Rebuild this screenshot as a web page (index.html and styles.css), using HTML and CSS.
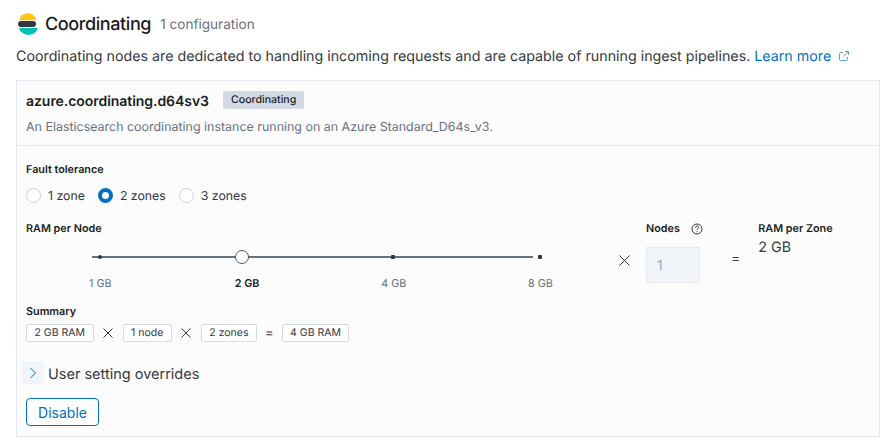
FILE: index.html
```html
<!DOCTYPE html>
<html lang="en">
<head>
<meta charset="utf-8">
<title>Coordinating</title>
<link rel="stylesheet" href="styles.css">
</head>
<body>
<header class="title-row">
  <svg class="logo" width="20" height="22" viewBox="0 0 20 22">
    <path d="M1.200 7.200C1.800 3.200 5.300.300 9.800.300s8 2.900 8.600 6.900z" fill="#fec514"/>
    <rect x="0" y="8" width="18" height="6" rx="3" fill="#343741"/>
    <path d="M1.200 15h18.400c-.5 3.900-4.300 6.800-9 6.800S1.800 18.900 1.200 15z" fill="#00bfb3"/>
  </svg>
  <h1 class="title">Coordinating</h1>
  <span class="config-count">1 configuration</span>
</header>
<p class="intro">Coordinating nodes are dedicated to handling incoming requests and are capable of running ingest pipelines. <a class="link" href="#">Learn more</a>
  <svg class="external" width="12" height="12" viewBox="0 0 12 12" fill="none" stroke="#5b9fd4" stroke-width="1"><path d="M5 2.500H2.500a1 1 0 0 0-1 1v6a1 1 0 0 0 1 1h6a1 1 0 0 0 1-1V7"/><path d="M7 1.500h3.500V5M10.500 1.500 5.500 6.500"/></svg>
</p>
<section class="panel">
  <div class="panel-head">
    <div class="instance-row">
      <h2 class="instance">azure.coordinating.d64sv3</h2>
      <span class="badge">Coordinating</span>
    </div>
    <p class="instance-desc">An Elasticsearch coordinating instance running on an Azure Standard_D64s_v3.</p>
  </div>
  <div class="panel-body">
    <div class="label">Fault tolerance</div>
    <div class="radios">
      <label class="radio"><span class="radio-dot"></span>1 zone</label>
      <label class="radio"><span class="radio-dot radio-on"></span>2 zones</label>
      <label class="radio"><span class="radio-dot"></span>3 zones</label>
    </div>
    <div class="sizing">
      <div class="ram">
        <div class="label">RAM per Node</div>
        <div class="slider">
          <div class="track"></div>
          <span class="tick tick-1"></span>
          <span class="thumb"></span>
          <span class="tick tick-3"></span>
          <span class="tick tick-4"></span>
        </div>
        <div class="slider-labels">
          <span>1 GB</span>
          <span class="current">2 GB</span>
          <span>4 GB</span>
          <span>8 GB</span>
        </div>
      </div>
      <svg class="times times-big" width="11" height="11" viewBox="0 0 11 11" stroke="#343741" stroke-width="1"><path d="M.5.500l10 10M10.500.500l-10 10"/></svg>
      <div class="nodes">
        <div class="label nodes-label">Nodes
          <svg width="12" height="12" viewBox="0 0 12 12" fill="none" stroke="#343741" stroke-width="1"><circle cx="6" cy="6" r="5"/><path d="M4.400 4.700c0-2.100 3.300-2.100 3.300-.1 0 1.200-1.700 1.300-1.700 2.500"/><path d="M6 8.200v1"/></svg>
        </div>
        <div class="nodes-input">1</div>
      </div>
      <span class="equals equals-big">=</span>
      <div class="zone">
        <div class="label">RAM per Zone</div>
        <div class="zone-value">2 GB</div>
      </div>
    </div>
    <div class="label summary-label">Summary</div>
    <div class="summary">
      <span class="chip">2 GB RAM</span>
      <svg class="times" width="10" height="10" viewBox="0 0 10 10" stroke="#343741" stroke-width="1"><path d="M.5.500l9 9M9.500.500l-9 9"/></svg>
      <span class="chip">1 node</span>
      <svg class="times" width="10" height="10" viewBox="0 0 10 10" stroke="#343741" stroke-width="1"><path d="M.5.500l9 9M9.500.500l-9 9"/></svg>
      <span class="chip">2 zones</span>
      <span class="equals">=</span>
      <span class="chip">4 GB RAM</span>
    </div>
    <div class="accordion">
      <span class="chevron"><svg width="8" height="12" viewBox="0 0 8 12" fill="none" stroke="#0071c2" stroke-width="1"><path d="M1.500 1l5 5-5 5"/></svg></span>
      <span class="accordion-text">User setting overrides</span>
    </div>
    <button class="disable" type="button">Disable</button>
  </div>
</section>
</body>
</html>
```
FILE: styles.css
```css
* { box-sizing: border-box; }
html, body { margin: 0; padding: 0; }
body {
  width: 880px;
  height: 440px;
  overflow: hidden;
  background: #fff;
  color: #343741;
  font-family: Inter, "Liberation Sans", sans-serif;
  padding: 11px 0 0 16px;
  text-rendering: geometricPrecision;
}
h1, h2, p { margin: 0; font-weight: 400; }

.title-row { display: flex; align-items: center; height: 25px; }
.logo { margin-left: 2px; margin-right: 7px; flex: none; }
.title { font-size: 18px; font-weight: 500; letter-spacing: -.4px; color: #1a1c21; line-height: 25px; padding-top: 1px; }
.config-count { font-size: 13.600px; color: #69707d; margin-left: 9px; margin-top: 3px; }

.intro { margin-top: 10px; font-size: 14.250px; line-height: 21px; color: #343741; white-space: nowrap; }
.link { color: #0071c2; text-decoration: none; }
.external { margin-left: 3px; vertical-align: -1px; }

.panel {
  margin-top: 13px;
  width: 864px;
  height: 357px;
  border: 1px solid #e3e8f2;
  background: #fcfcfd;
}
.panel-head { height: 65px; padding: 10px 9px 0; border-bottom: 1px solid #e3e8f2; }
.instance-row { display: flex; align-items: center; height: 18px; }
.instance { font-size: 14px; font-weight: 600; letter-spacing: -.05px; color: #1a1c21; position: relative; top: 1px; }
.badge {
  margin-left: 14px;
  background: #d3dae6;
  color: #1a1c21;
  font-size: 10.600px;
  font-weight: 500;
  line-height: 18px;
  padding: 0 8px;
  border-radius: 2px;
}
.instance-desc { margin-top: 10px; font-size: 12.450px; line-height: 18px; color: #69707d; white-space: nowrap; }

.panel-body { padding: 16px 9px 0; }
.label { font-size: 10.800px; font-weight: 600; color: #1a1c21; line-height: 16px; white-space: nowrap; }

.radios { display: flex; gap: 13px; margin-top: 7px; height: 20px; align-items: center; }
.radio { display: flex; align-items: center; font-size: 12.300px; color: #343741; }
.radio-dot {
  width: 15px;
  height: 15px;
  border-radius: 50%;
  border: 1px solid #c9cfdb;
  background: #fff;
  margin-right: 7px;
}
.radio-on { border: 4.500px solid #0071c2; }

.sizing { display: flex; margin-top: 16px; height: 74px; }
.ram { width: 590px; flex: none; }
.slider { position: relative; height: 14px; margin-top: 13px; }
.track { position: absolute; left: 66px; width: 441px; top: 6px; height: 2px; background: #69707d; }
.tick { position: absolute; width: 4px; height: 4px; top: 5px; background: #343741; }
.tick-1 { left: 72px; border-radius: 50%; }
.tick-3 { left: 365px; border-radius: 1px; }
.tick-4 { left: 512px; border-radius: 1px; }
.thumb {
  position: absolute;
  left: 208.500px;
  top: 0;
  width: 14px;
  height: 14px;
  border-radius: 50%;
  background: #fff;
  border: 1px solid #535966;
}
.slider-labels { display: flex; margin-top: 12px; padding-left: 1px; font-size: 10.800px; line-height: 16px; color: #69707d; }
.slider-labels span { flex: none; width: 146.700px; text-align: center; }
.slider-labels .current { font-weight: 600; color: #1a1c21; }

.times { flex: none; }
.times-big { margin: 34px 0 0 3px; }
.nodes { margin-left: 16px; width: 54px; flex: none; }
.nodes-label { display: flex; justify-content: space-between; width: 57px; align-items: center; }
.nodes-input {
  margin-top: 10px;
  width: 54px;
  height: 36px;
  background: #f1f4f9;
  border: 1px solid #e3e8f2;
  color: #98a2b3;
  font-size: 13.500px;
  line-height: 36px;
  padding-left: 10px;
}
.equals { font-size: 13px; line-height: 16px; color: #343741; }
.equals-big { margin: 30px 0 0 31px; font-size: 14px; }
.zone { margin-left: 18px; }
.zone-value { margin-top: 1px; font-size: 14.300px; line-height: 20px; color: #343741; }

.summary-label { margin-top: 9px; }
.summary { display: flex; align-items: center; margin-top: 4px; height: 18px; }
.chip {
  height: 18px;
  line-height: 15px;
  border: 1px solid #d3dae6;
  border-radius: 2px;
  background: #fff;
  padding: 0 7.500px;
  font-size: 10.500px;
  color: #343741;
  white-space: nowrap;
}
.summary .times { margin: 0 9.500px; }
.summary .equals { margin: 0 8px; }

.accordion { display: flex; align-items: center; margin: 19px 0 0 -4px; height: 23px; font-size: 14.500px; color: #343741; }
.accordion-text { padding-top: 3px; }
.chevron {
  width: 22px;
  height: 23px;
  border-radius: 4px;
  background: #f1f4f9;
  display: flex;
  align-items: center;
  justify-content: center;
  margin-right: 4px;
}
.disable {
  display: block;
  margin-top: 14px;
  width: 73px;
  height: 28px;
  background: #fff;
  border: 1px solid #0071c2;
  border-radius: 4px;
  color: #0071c2;
  font-family: inherit;
  font-size: 14px;
  padding: 0;
}
```
